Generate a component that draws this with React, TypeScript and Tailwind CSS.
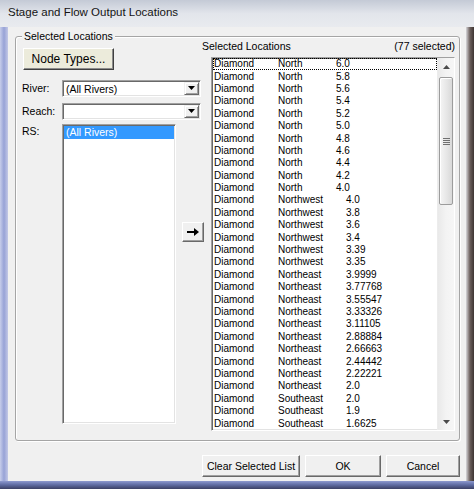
import React from "react";

type Row = [string, string];

const rows: Row[] = [
  ["North", "6.0"],
  ["North", "5.8"],
  ["North", "5.6"],
  ["North", "5.4"],
  ["North", "5.2"],
  ["North", "5.0"],
  ["North", "4.8"],
  ["North", "4.6"],
  ["North", "4.4"],
  ["North", "4.2"],
  ["North", "4.0"],
  ["Northwest", "4.0"],
  ["Northwest", "3.8"],
  ["Northwest", "3.6"],
  ["Northwest", "3.4"],
  ["Northwest", "3.39"],
  ["Northwest", "3.35"],
  ["Northeast", "3.9999"],
  ["Northeast", "3.77768"],
  ["Northeast", "3.55547"],
  ["Northeast", "3.33326"],
  ["Northeast", "3.11105"],
  ["Northeast", "2.88884"],
  ["Northeast", "2.66663"],
  ["Northeast", "2.44442"],
  ["Northeast", "2.22221"],
  ["Northeast", "2.0"],
  ["Southeast", "2.0"],
  ["Southeast", "1.9"],
  ["Southeast", "1.6625"],
];

function Combo({ text }: { text: string }) {
  return (
    <div className="flex w-[139px] h-[17px] bg-white border border-t-[#a0a0a0] border-l-[#a0a0a0] border-b-white border-r-white shadow-[inset_1px_1px_0_#696969,inset_-1px_-1px_0_#e3e3e3]">
      <div className="flex-1 flex items-center pl-[3px] pt-[1px] text-[10.5px] leading-none whitespace-nowrap">{text}</div>
      <div className="w-[15px] h-[13px] mt-[1px] mr-[1px] flex items-center justify-center bg-[#f0f0f0] border border-t-[#f0f0f0] border-l-[#f0f0f0] border-r-[#696969] border-b-[#696969] shadow-[inset_1px_1px_0_#fff,inset_-1px_-1px_0_#a0a0a0]">
        <svg width="7" height="5" viewBox="0 0 7 5">
          <polygon points="0,0 7,0 3.5,4" fill="#000" />
        </svg>
      </div>
    </div>
  );
}

function Btn({ w, children, className = "" }: { w: string; children: React.ReactNode; className?: string }) {
  return (
    <div
      className={`${w} h-[22px] flex items-center justify-center bg-[#f0f0f0] border border-t-white border-l-white border-r-[#696969] border-b-[#696969] shadow-[inset_-1px_-1px_0_#a0a0a0] text-[10.5px] leading-none ${className}`}
    >
      {children}
    </div>
  );
}

export default function App() {
  return (
    <div className="w-[474px] h-[489px] flex flex-col overflow-hidden [font-family:'Liberation_Sans',Arial,sans-serif] text-black bg-[#7f8db8]">
      {/* title bar */}
      <div className="h-[27px] flex items-center pl-[8px] pb-[1px] bg-linear-to-b from-[#c4cad6] via-[#e2e5eb] to-[#e9ebef]">
        <span className="text-[11.5px] text-[#141414] leading-none">Stage and Flow Output Locations</span>
      </div>
      <div className="flex h-[454px]">
        {/* left frame */}
        <div className="w-[8px] bg-linear-to-r from-[#c7cdea] via-[#97a2d6] to-[#c3c8e6]" />
        {/* client */}
        <div className="w-[458px] bg-[#f0f0f0] flex flex-col pt-[9px] pl-[7px] pr-[6px]">
          <div className="relative h-[405px] flex border border-[#a5a5a5] rounded-[3px] shadow-[inset_1px_1px_0_#fff,1px_1px_0_#fff]">
            <div className="absolute left-[6px] top-[-7px] px-[2px] bg-[#f0f0f0] text-[10.5px] leading-[13px]">Selected Locations</div>
            {/* left column */}
            <div className="w-[189px] flex flex-col pl-[6px] pt-[11px]">
              <div className="ml-[1px] w-[91px] h-[22px] flex items-center justify-center bg-[#ecebdb] border border-t-white border-l-white border-r-[#404040] border-b-[#404040] shadow-[inset_-1px_-1px_0_#8c8c8c] text-[12px] leading-none">
                Node Types...
              </div>
              <div className="mt-[10px] flex items-center">
                <div className="w-[40px] text-[10.5px] leading-none">River:</div>
                <Combo text="(All Rivers)" />
              </div>
              <div className="mt-[6px] flex items-center">
                <div className="w-[40px] text-[10.5px] leading-none">Reach:</div>
                <Combo text="" />
              </div>
              <div className="mt-[4px] flex items-start">
                <div className="w-[40px] pt-[2px] text-[10.5px] leading-none">RS:</div>
                <div className="w-[114px] h-[300px] bg-white border border-t-[#a0a0a0] border-l-[#a0a0a0] border-b-white border-r-white shadow-[inset_1px_1px_0_#696969,inset_-1px_-1px_0_#e3e3e3] pt-[1px] px-[1px]">
                  <div className="h-[13px] flex items-center bg-[#3399ff] text-white pl-[2px] text-[10.5px] leading-none">(All Rivers)</div>
                </div>
                <div className="ml-[6px] mt-[98px] w-[22px] h-[20px] flex items-center justify-center bg-[#f0f0f0] border border-t-white border-l-white border-r-[#696969] border-b-[#696969] shadow-[inset_-1px_-1px_0_#a0a0a0]">
                  <svg width="12" height="8" viewBox="0 0 12 8">
                    <rect x="0" y="3" width="8" height="2" fill="#000" />
                    <polygon points="7,0 12,4 7,8" fill="#000" />
                  </svg>
                </div>
              </div>
            </div>
            {/* right column */}
            <div className="flex-1 flex flex-col pt-[3px]">
              <div className="-ml-[3px] mr-[4px] h-[13px] flex items-center justify-between text-[10.5px] leading-none">
                <span>Selected Locations</span>
                <span>(77 selected)</span>
              </div>
              <div className="ml-[6px] mt-[4px] w-[244px] h-[374px] flex bg-white border border-t-[#a0a0a0] border-l-[#a0a0a0] border-b-white border-r-white shadow-[inset_1px_1px_0_#696969,inset_-1px_-1px_0_#e3e3e3]">
                <div className="flex-1 flex flex-col pl-[1px]">
                  {rows.map(([reach, rs], i) => (
                    <div
                      key={i}
                      className={`h-[12.4px] flex items-center pl-[1px] text-[10px] leading-none whitespace-nowrap ${
                        i === 0 ? "outline-1 outline-dotted outline-black -outline-offset-1" : ""
                      }`}
                    >
                      <span className="w-[64px]">Diamond</span>
                      <span className={reach === "North" ? "w-[58px]" : "w-[68px]"}>{reach}</span>
                      <span>{rs}</span>
                    </div>
                  ))}
                </div>
                {/* scrollbar */}
                <div className="w-[17px] flex flex-col bg-linear-to-r from-[#e9e9e9] via-[#f3f3f3] to-[#f6f6f6] border-l border-[#ececec]">
                  <div className="h-[17px] flex items-center justify-center">
                    <svg width="7" height="4" viewBox="0 0 7 4">
                      <polygon points="0,4 7,4 3.5,0" fill="#4a4a4a" />
                    </svg>
                  </div>
                  <div className="mt-[2px] mx-[1px] h-[128px] rounded-[2px] border border-[#9c9c9c] bg-linear-to-r from-[#f5f5f5] via-[#e8e8e8] to-[#d9d9d9] shadow-[inset_1px_1px_0_#fff] flex flex-col items-center justify-center gap-[1px]">
                    <div className="w-[7px] h-[1px] bg-[#707070]" />
                    <div className="w-[7px] h-[1px] bg-[#707070]" />
                    <div className="w-[7px] h-[1px] bg-[#707070]" />
                    <div className="w-[7px] h-[1px] bg-[#707070]" />
                  </div>
                  <div className="flex-1" />
                  <div className="h-[17px] flex items-center justify-center">
                    <svg width="7" height="4" viewBox="0 0 7 4">
                      <polygon points="0,0 7,0 3.5,4" fill="#4a4a4a" />
                    </svg>
                  </div>
                </div>
              </div>
            </div>
          </div>
          <div className="mt-[14px] flex justify-end gap-[5px]">
            <Btn w="w-[98px]">Clear Selected List</Btn>
            <Btn w="w-[76px]">OK</Btn>
            <Btn w="w-[74px]">Cancel</Btn>
          </div>
        </div>
        {/* right frame */}
        <div className="w-[8px] bg-linear-to-r from-[#d8d8dc] via-[#6b5f5c] to-[#3e3533]" />
      </div>
      {/* bottom frame */}
      <div className="flex-1 bg-linear-to-b from-[#8d99cf] via-[#5d6aa0] to-[#3b4064]" />
    </div>
  );
}
